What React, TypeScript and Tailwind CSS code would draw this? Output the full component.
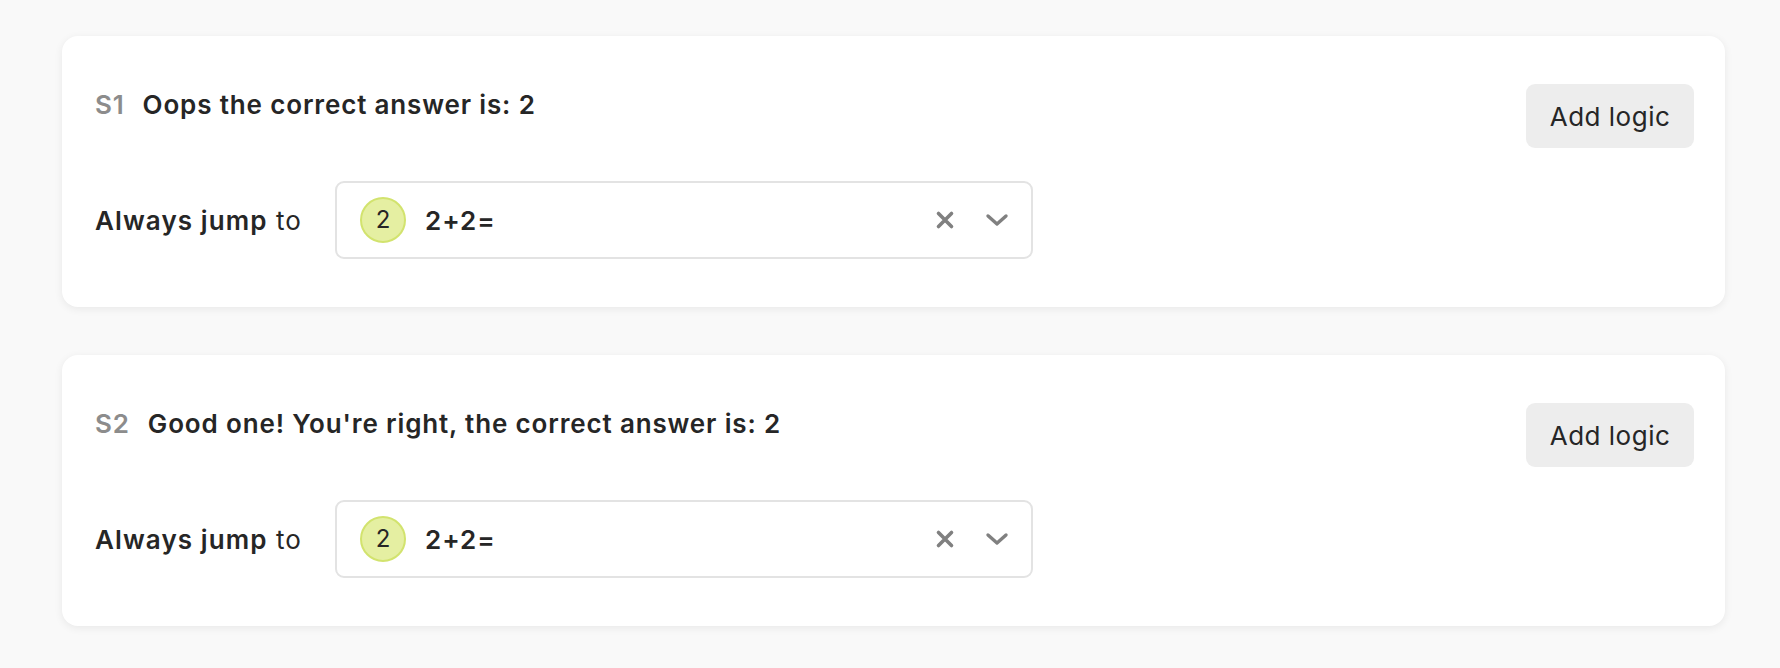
import React from 'react';

type Screen = { id: string; title: string };

const screens: Screen[] = [
  { id: 'S1', title: 'Oops the correct answer is: 2' },
  { id: 'S2', title: "Good one! You're right, the correct answer is: 2" },
];

function XIcon() {
  return (
    <svg width="20" height="20" viewBox="0 0 20 20" fill="none">
      <path d="M3.5 3.5l13 13M16.5 3.5l-13 13" stroke="#808080" strokeWidth="3.6" strokeLinecap="round" />
    </svg>
  );
}

function ChevronIcon() {
  return (
    <svg width="24" height="14" viewBox="0 0 24 14" fill="none">
      <path d="M3 3l9 8 9-8" stroke="#808080" strokeWidth="3.4" strokeLinecap="round" strokeLinejoin="round" />
    </svg>
  );
}

function LogicCard({ screen }: { screen: Screen }) {
  return (
    <div className="bg-white rounded-[16px] shadow-[0_2px_8px_rgba(0,0,0,0.07)] pl-[33px] pr-[31px] pt-[48px] pb-[48px]">
      {/* header */}
      <div className="flex items-start justify-between">
        <div className="flex items-center gap-[18px] leading-[40px] mt-px text-[26px] font-semibold tracking-[0.85px]">
          <span className="text-[#8c8c8c]">{screen.id}</span>
          <span className="text-[#262626]">{screen.title}</span>
        </div>
        <button className="h-[64px] w-[168px] rounded-[9px] bg-[#ededed] text-[26px] tracking-[0.5px] text-[#262626]">
          Add logic
        </button>
      </div>

      {/* jump row */}
      <div className="flex items-center mt-[33px]">
        <div className="w-[240px] text-[26px] tracking-[1.1px] text-[#262626]">
          <span className="font-semibold">Always jump</span> to
        </div>
        <div className="flex items-center h-[78px] w-[698px] rounded-[9px] border-2 border-[#e3e3e3] pl-[23px] pr-[22px]">
          <div className="flex items-center justify-center w-[46px] h-[46px] rounded-full bg-[#e5efa2] border-2 border-[#d2e36e] text-[24px] text-[#262626]">
            2
          </div>
          <span className="ml-[19px] text-[26px] font-semibold tracking-[1px] text-[#262626]">2+2=</span>
          <div className="flex-1" />
          <XIcon />
          <div className="ml-[30px]">
            <ChevronIcon />
          </div>
        </div>
      </div>
    </div>
  );
}

export default function App() {
  return (
    <div className="min-h-[668px] bg-[#f9f9f9] pt-[36px] pb-[40px] pl-[62px] pr-[55px] font-['Inter',sans-serif]">
      <div className="flex flex-col gap-[48px]">
        {screens.map((s) => (
          <LogicCard key={s.id} screen={s} />
        ))}
      </div>
    </div>
  );
}
